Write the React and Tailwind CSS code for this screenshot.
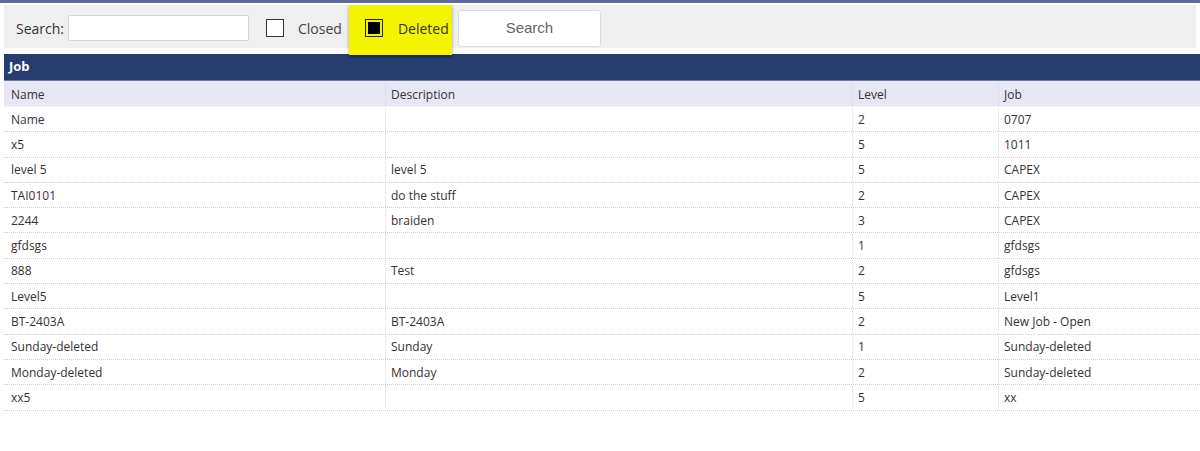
import React from 'react';

const rows = [
  ['Name', '', '2', '0707'],
  ['x5', '', '5', '1011'],
  ['level 5', 'level 5', '5', 'CAPEX'],
  ['TAI0101', 'do the stuff', '2', 'CAPEX'],
  ['2244', 'braiden', '3', 'CAPEX'],
  ['gfdsgs', '', '1', 'gfdsgs'],
  ['888', 'Test', '2', 'gfdsgs'],
  ['Level5', '', '5', 'Level1'],
  ['BT-2403A', 'BT-2403A', '2', 'New Job - Open'],
  ['Sunday-deleted', 'Sunday', '1', 'Sunday-deleted'],
  ['Monday-deleted', 'Monday', '2', 'Sunday-deleted'],
  ['xx5', '', '5', 'xx'],
];

// column widths taken from the grid lines
const cols = 'grid grid-cols-[381px_467px_146px_202px]';

const App = () => {
  return (
    <div className="w-[1200px] h-[451px] bg-white overflow-hidden font-['Open_Sans',sans-serif] text-[#333]">
      <div className="h-[3px] bg-[#5b6b9c]" />
      <div className="h-[2px] bg-white" />

      {/* Toolbar */}
      <div className="px-[4px]">
        <div className="h-[43px] bg-[#efefef] flex items-center text-[14px]">
          <span className="ml-[12px] mt-[3px]">Search:</span>
          <input
            type="text"
            className="ml-[4px] mt-[3px] w-[181px] h-[26px] bg-white border border-[#d4d4d4] rounded-[2px] outline-none"
          />
          <div className="ml-[17px] mt-[3px] w-[18px] h-[18px] border border-[#333] bg-white" />
          <span className="ml-[14px] mt-[3px] text-[#444]">Closed</span>

          {/* highlighted Deleted option */}
          <div className="relative z-10 self-start ml-[7px] w-[103px] h-[50px] bg-[#f4f400] shadow-[0_2px_3px_rgba(0,0,0,0.35)] pt-[14px]">
            <div className="flex items-center h-[18px]">
              <div className="ml-[16px] w-[18px] h-[18px] border-[1.5px] border-[#222] p-[2px]">
                <div className="w-full h-full bg-black" />
              </div>
              <span className="ml-[15px] text-[#333]">Deleted</span>
            </div>
          </div>

          <button className="ml-[6px] mt-[4px] w-[143px] h-[37px] bg-white border border-[#dcdcdc] rounded-[3px] font-['Liberation_Sans',sans-serif] text-[15px] text-[#666]">
            Search
          </button>
        </div>
      </div>

      {/* Job table */}
      <div className="mt-[6px] ml-[4px] w-[1196px] text-[12px]">
        <div className="h-[27px] bg-[#263d70] border-b border-[#6a7aa3] flex items-center px-[5px] text-white font-bold text-[13px]">
          Job
        </div>
        <div className={`${cols} h-[26px] pt-[2px] bg-[#e7e7f3] border-b border-[#f2f2f8]`}>
          {['Name', 'Description', 'Level', 'Job'].map((h, i) => (
            <div
              key={h}
              className={`flex items-center ${i > 0 ? 'border-l border-dotted border-[#d6d6e0] pl-[5px]' : 'pl-[7px]'}`}
            >
              {h}
            </div>
          ))}
        </div>
        {rows.map((r, ri) => (
          <div key={ri} className={`${cols} h-[25.3px] pt-[1px] border-b border-dotted border-[#cfcfcf]`}>
            {r.map((c, ci) => (
              <div
                key={ci}
                className={`flex items-center ${ci > 0 ? 'border-l border-dotted border-[#dcdcdc] pl-[5px]' : 'pl-[7px]'}`}
              >
                {c}
              </div>
            ))}
          </div>
        ))}
      </div>
    </div>
  );
};

export default App;
